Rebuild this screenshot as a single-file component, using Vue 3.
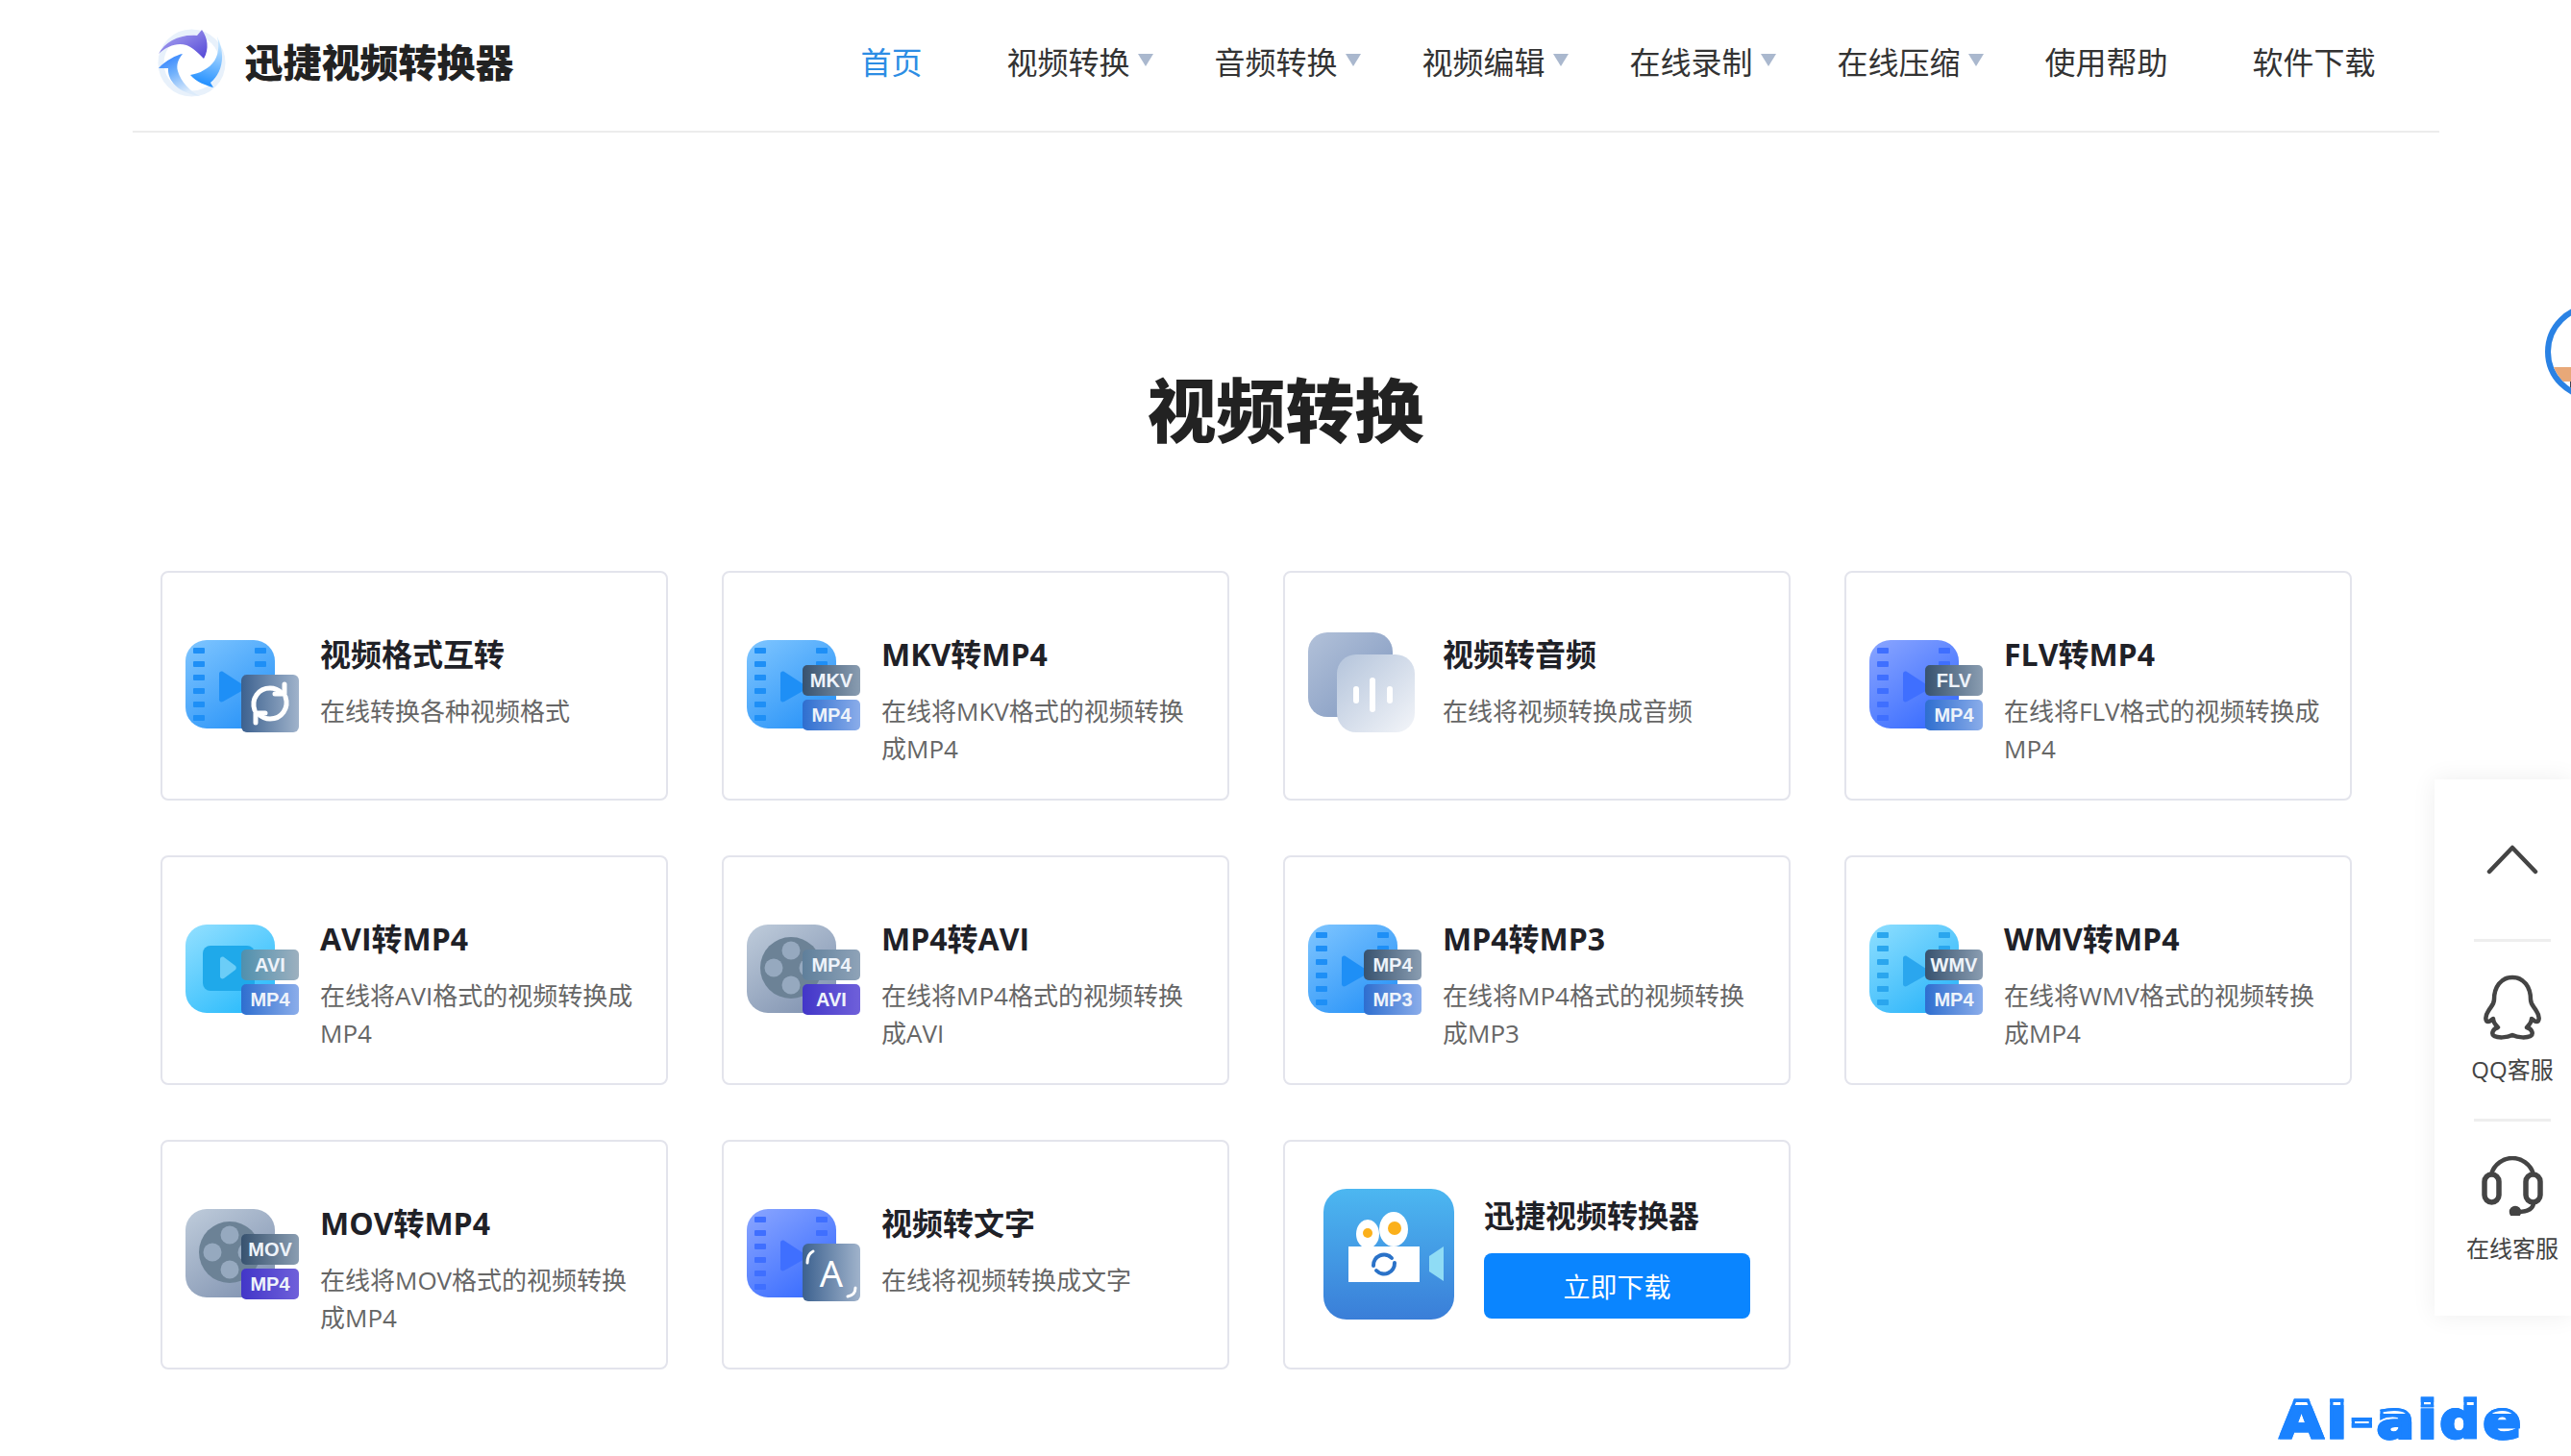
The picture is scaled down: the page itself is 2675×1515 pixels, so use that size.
<script setup>
const navItems = [
  { label: '首页', active: true },
  { label: '视频转换', arrow: true },
  { label: '音频转换', arrow: true },
  { label: '视频编辑', arrow: true },
  { label: '在线录制', arrow: true },
  { label: '在线压缩', arrow: true },
  { label: '使用帮助' },
  { label: '软件下载' }
]

const filmColors = {
  blue: ['#80c6ff', '#2c95f8', '#1e8ff6'],
  indigo: ['#8ba6ff', '#3a6dff', '#3f6fff'],
  cyan: ['#8fdfff', '#2fb6fa', '#2aa6ee']
}

const holeRows = [8, 22, 36, 50, 64, 78]

const tools = [
  { title: '视频格式互转', desc: '在线转换各种视频格式', body: 'film', color: 'blue', over: 'swap' },
  { title: 'MKV转MP4', desc: '在线将MKV格式的视频转换成MP4', body: 'film', color: 'blue', tags: [['MKV', 'dark'], ['MP4', 'blue']] },
  { title: '视频转音频', desc: '在线将视频转换成音频', body: 'audio' },
  { title: 'FLV转MP4', desc: '在线将FLV格式的视频转换成MP4', body: 'film', color: 'indigo', tags: [['FLV', 'dark'], ['MP4', 'blue']] },
  { title: 'AVI转MP4', desc: '在线将AVI格式的视频转换成MP4', body: 'play', tags: [['AVI', 'teal'], ['MP4', 'blue']] },
  { title: 'MP4转AVI', desc: '在线将MP4格式的视频转换成AVI', body: 'reel', tags: [['MP4', 'slate'], ['AVI', 'purple']] },
  { title: 'MP4转MP3', desc: '在线将MP4格式的视频转换成MP3', body: 'film', color: 'blue', tags: [['MP4', 'dark'], ['MP3', 'blue']] },
  { title: 'WMV转MP4', desc: '在线将WMV格式的视频转换成MP4', body: 'film', color: 'cyan', tags: [['WMV', 'dark'], ['MP4', 'blue']] },
  { title: 'MOV转MP4', desc: '在线将MOV格式的视频转换成MP4', body: 'reel', tags: [['MOV', 'dark'], ['MP4', 'purple']] },
  { title: '视频转文字', desc: '在线将视频转换成文字', body: 'film', color: 'indigo', over: 'text' }
]
</script>

<template>
  <div class="page">
    <header class="topbar">
      <div class="brand">
        <svg class="brand-mark" viewBox="0 0 71 73" width="71" height="73">
          <defs>
            <linearGradient id="swirlA" x1="0" y1="0" x2="1" y2="1">
              <stop offset="0" stop-color="#b3adf3" />
              <stop offset="1" stop-color="#5246d6" />
            </linearGradient>
            <linearGradient id="swirlB" x1="0" y1="0" x2="0.5" y2="1">
              <stop offset="0" stop-color="#2477ff" />
              <stop offset="0.5" stop-color="#6fb0fb" />
              <stop offset="1" stop-color="#dcebfb" />
            </linearGradient>
            <linearGradient id="swirlC" x1="0.6" y1="0" x2="0.4" y2="1">
              <stop offset="0" stop-color="#d2ecff" />
              <stop offset="1" stop-color="#188aff" />
            </linearGradient>
          </defs>
          <circle cx="35.5" cy="36.5" r="32" fill="none" stroke="#e8f1fb" stroke-width="6" />
          <path d="M1 27C8 14 24 6 41 8L46 2C52 10 54 22 48 32C42 26 36 20 30 18C20 15 10 19 1 27Z" fill="url(#swirlA)" />
          <path d="M26 27C20 28 8 34 1 42L11 42C10 55 22 68 44 71C34 66 24 56 21 45C19 38 22 32 26 27Z" fill="url(#swirlB)" />
          <path d="M34 49C40 56 50 60 58 62L55 57C66 48 72 30 62 9C66 26 60 38 48 44C44 47 38 48 34 49Z" fill="url(#swirlC)" />
        </svg>
        <span class="brand-name">迅捷视频转换器</span>
      </div>
      <nav class="nav">
        <a v-for="item in navItems" :key="item.label" class="nav-link" :class="{ active: item.active, 'has-arrow': item.arrow }">{{ item.label }}</a>
      </nav>
    </header>

    <main class="content">
      <h1 class="heading">视频转换</h1>
      <div class="tool-grid">
        <div v-for="(tool, i) in tools" :key="tool.title" class="tool-card">
          <div class="tool-icon">
            <svg v-if="tool.body === 'film'" class="tool-body" viewBox="0 0 93 92" width="93" height="92">
              <defs>
                <linearGradient :id="'film' + i" x1="0" y1="0" x2="0.7" y2="1">
                  <stop offset="0" :stop-color="filmColors[tool.color][0]" />
                  <stop offset="1" :stop-color="filmColors[tool.color][1]" />
                </linearGradient>
              </defs>
              <rect width="93" height="92" rx="22" :fill="'url(#film' + i + ')'" />
              <g :fill="filmColors[tool.color][2]">
                <template v-for="y in holeRows" :key="y">
                  <rect x="8" :y="y" width="12" height="6" rx="1" />
                  <rect x="72" :y="y" width="12" height="6" rx="1" />
                </template>
                <path d="M35 35C35 33 37 32 39 33L62 48C63 49 63 50 62 51L39 64C37 65 35 64 35 62Z" />
              </g>
            </svg>

            <svg v-else-if="tool.body === 'play'" class="tool-body" viewBox="0 0 93 92" width="93" height="92">
              <defs>
                <linearGradient :id="'play' + i" x1="0" y1="0" x2="0.7" y2="1">
                  <stop offset="0" stop-color="#94e0ff" />
                  <stop offset="1" stop-color="#2dbcfc" />
                </linearGradient>
              </defs>
              <rect width="93" height="92" rx="22" :fill="'url(#play' + i + ')'" />
              <rect x="18" y="22" width="54" height="47" rx="8" fill="#1fa9ea" />
              <path d="M36 36C36 34 38 33 40 34L52 43C53 44 53 46 52 47L40 56C38 57 36 56 36 54Z" fill="#6bcdf7" />
            </svg>

            <svg v-else-if="tool.body === 'reel'" class="tool-body" viewBox="0 0 93 92" width="93" height="92">
              <defs>
                <linearGradient :id="'reel' + i" x1="0" y1="0" x2="0.7" y2="1">
                  <stop offset="0" stop-color="#bfccdb" />
                  <stop offset="1" stop-color="#8496b3" />
                </linearGradient>
              </defs>
              <rect width="93" height="92" rx="22" :fill="'url(#reel' + i + ')'" />
              <circle cx="46" cy="45" r="32" fill="#6c8296" />
              <g fill="#96a9bf">
                <circle cx="46" cy="27" r="9.5" />
                <circle cx="46" cy="63" r="9.5" />
                <circle cx="28" cy="45" r="9.5" />
                <circle cx="64" cy="45" r="9.5" />
              </g>
            </svg>

            <svg v-else class="tool-body audio" viewBox="0 0 112 104" width="112" height="104">
              <defs>
                <linearGradient :id="'back' + i" x1="0" y1="0" x2="1" y2="1">
                  <stop offset="0" stop-color="#b2c1d9" />
                  <stop offset="1" stop-color="#7f97bf" />
                </linearGradient>
                <linearGradient :id="'front' + i" x1="0" y1="0" x2="1" y2="1">
                  <stop offset="0" stop-color="#b4c4db" />
                  <stop offset="1" stop-color="#f3f5f9" />
                </linearGradient>
              </defs>
              <rect width="88" height="88" rx="20" :fill="'url(#back' + i + ')'" />
              <rect x="30" y="23" width="81" height="81" rx="20" :fill="'url(#front' + i + ')'" />
              <g fill="#fff">
                <rect x="47" y="56" width="6" height="18" rx="3" />
                <rect x="64" y="47" width="6" height="36" rx="3" />
                <rect x="82" y="56" width="6" height="18" rx="3" />
              </g>
            </svg>

            <template v-if="tool.tags">
              <span v-for="tag in tool.tags" :key="tag[0]" class="tag" :class="'tag-' + tag[1]">{{ tag[0] }}</span>
            </template>

            <div v-if="tool.over" class="over-tile">
              <svg v-if="tool.over === 'swap'" viewBox="0 0 60 60" width="60" height="60" fill="none" stroke="#fff" stroke-width="5" stroke-linecap="round" stroke-linejoin="round">
                <path d="M14 37C10 25 18 14 30 14C35 14 39 16 42 19" />
                <path d="M45 10V20H35" />
                <path d="M46 23C50 35 42 46 30 46C25 46 21 44 18 41" />
                <path d="M15 50V40H25" />
              </svg>
              <template v-else>
                <span class="over-letter">A</span>
                <svg class="over-corners" viewBox="0 0 60 60" width="60" height="60" fill="none" stroke="#fff" stroke-width="3" stroke-linecap="round">
                  <path d="M5 20C5 13 7 10 11 8" />
                  <path d="M55 46C55 52 52 54 47 55" />
                </svg>
              </template>
            </div>
          </div>
          <div class="tool-text">
            <h3 class="tool-title">{{ tool.title }}</h3>
            <p class="tool-desc">{{ tool.desc }}</p>
          </div>
        </div>

        <div class="tool-card download-card">
          <svg class="app-icon" viewBox="0 0 136 136" width="136" height="136">
            <defs>
              <linearGradient id="appBg" x1="0" y1="0" x2="0" y2="1">
                <stop offset="0" stop-color="#4cb7f1" />
                <stop offset="1" stop-color="#3a7ed8" />
              </linearGradient>
            </defs>
            <rect width="136" height="136" rx="24" fill="url(#appBg)" />
            <rect x="26" y="60" width="74" height="37" fill="#fff" />
            <path d="M110 70L125 60V96L110 86Z" fill="#8fdcf5" />
            <ellipse cx="46" cy="47" rx="12" ry="15" fill="#fff" />
            <ellipse cx="73" cy="42" rx="15" ry="18" fill="#fff" />
            <circle cx="46" cy="46" r="5" fill="#fbb01b" />
            <circle cx="74" cy="41" r="7" fill="#fbb01b" />
            <g fill="none" stroke="#2a72c8" stroke-width="4" stroke-linecap="round">
              <path d="M52 80A11 11 0 0 1 71 72" />
              <path d="M74 77A11 11 0 0 1 55 85" />
            </g>
          </svg>
          <div class="download-side">
            <h3 class="tool-title download-title">迅捷视频转换器</h3>
            <button class="download-btn">立即下载</button>
          </div>
        </div>
      </div>
    </main>

    <!-- avatar peeking in from the right edge -->
    <div class="peek">
      <div class="peek-skin"></div>
      <div class="peek-dark"></div>
    </div>

    <aside class="side-panel">
      <div class="side-cell side-top">
        <svg viewBox="0 0 54 32" width="54" height="32" fill="none" stroke="#444" stroke-width="4.5" stroke-linecap="round" stroke-linejoin="round">
          <path d="M3 29L27 4L51 29" />
        </svg>
      </div>
      <div class="side-line"></div>
      <div class="side-cell side-qq">
        <svg viewBox="0 0 62 69" width="62" height="69" fill="none" stroke="#444" stroke-width="4.5" stroke-linejoin="round">
          <path d="M31 3C19 3 12 13 12 26C12 31 9 33 6 38C2 44 3 49 6 49C8 49 9 47 11 46C11 50 14 53 16 55C10 57 9 62 12 64C16 66 25 66 31 63C37 66 46 66 50 64C53 62 52 57 46 55C48 53 51 50 51 46C53 47 54 49 56 49C59 49 60 44 56 38C53 33 50 31 50 26C50 13 43 3 31 3Z" />
        </svg>
        <span>QQ客服</span>
      </div>
      <div class="side-line"></div>
      <div class="side-cell side-chat">
        <svg viewBox="0 0 64 62" width="64" height="62" fill="none" stroke="#444" stroke-width="4.5" stroke-linecap="round">
          <path d="M10 19C13 8 23 2 32 2C41 2 51 8 54 19" />
          <rect x="3" y="19" width="15" height="29" rx="7.5" stroke-width="5.5" />
          <rect x="46" y="19" width="15" height="29" rx="7.5" stroke-width="5.5" />
          <path d="M54 48C54 55 47 58 37 58" />
          <circle cx="35" cy="58" r="4" fill="#444" />
        </svg>
        <span>在线客服</span>
      </div>
    </aside>

    <div class="watermark">
      <span class="snow-cap">A</span><span class="snow-cap">I</span><span class="snow-dash">-</span><span class="snow-x">a</span><span class="snow-cap">i</span><span class="snow-cap">d</span><span class="snow-x">e</span>
    </div>
  </div>
</template>

<style>
html,
body {
  background: #fff;
}
</style>

<style scoped>
.page {
  position: relative;
  width: 2675px;
  height: 1515px;
  overflow: hidden;
  background: #fff;
  font-family: "Open Sans", "Noto Sans CJK SC", sans-serif;
  color: #333;
}

.topbar {
  display: flex;
  align-items: center;
  justify-content: space-between;
  box-sizing: border-box;
  width: 2400px;
  height: 138px;
  margin: 0 auto;
  padding: 0 66px 6px 26px;
  border-bottom: 2px solid #ececec;
}

.brand {
  display: flex;
  align-items: center;
  gap: 20px;
}

.brand-name {
  font-size: 40px;
  font-weight: 900;
  color: #222;
  line-height: 1;
}

.nav {
  display: flex;
  gap: 88px;
}

.nav-link {
  position: relative;
  font-size: 32px;
  line-height: 44px;
  color: #333;
}

.nav-link.active {
  color: #2c8de4;
}

.nav-link.has-arrow::after {
  content: "";
  position: absolute;
  left: 137px;
  top: 13px;
  border-top: 13px solid #aab8ce;
  border-left: 8px solid transparent;
  border-right: 8px solid transparent;
}

.content {
  width: 2341px;
  margin: 0 auto;
}

.heading {
  margin: 238px 0 118px;
  font-size: 72px;
  line-height: 100px;
  font-weight: 900;
  text-align: center;
  color: #222;
}

.tool-grid {
  display: grid;
  grid-template-columns: repeat(4, 528px);
  grid-auto-rows: 239px;
  column-gap: 56px;
  row-gap: 57px;
}

.tool-card {
  display: flex;
  align-items: flex-start;
  box-sizing: border-box;
  padding: 70px 0 0 24px;
  border: 2px solid #e3e4ec;
  border-radius: 8px;
  background: #fff;
}

.tool-icon {
  position: relative;
  flex: none;
  width: 118px;
  height: 96px;
  margin-right: 22px;
}

.tool-body {
  display: block;
}

.tool-body.audio {
  margin: -8px 0 0 0;
}

.tag {
  position: absolute;
  left: 58px;
  width: 60px;
  height: 32px;
  border-radius: 5px;
  font-family: "Liberation Sans", sans-serif;
  font-size: 20px;
  font-weight: 700;
  line-height: 32px;
  text-align: center;
  color: #eef3fa;
}

.tag:first-of-type {
  top: 26px;
}

.tag:last-of-type {
  top: 62px;
}

.tag-dark {
  background: linear-gradient(90deg, #37526f, #8a9db1);
}

.tag-slate {
  background: linear-gradient(90deg, #5f7f9b, #8fa3b8);
}

.tag-teal {
  background: linear-gradient(90deg, #4f90ae, #9db0bf);
}

.tag-blue {
  background: linear-gradient(90deg, #2e6ecf, #8badea);
}

.tag-purple {
  background: linear-gradient(90deg, #4236c8, #6f60da);
}

.over-tile {
  position: absolute;
  left: 58px;
  top: 36px;
  width: 60px;
  height: 60px;
  border-radius: 6px;
  background: linear-gradient(90deg, #3c618f, #a0b3cb);
}

.over-tile svg {
  display: block;
}

.over-letter {
  position: absolute;
  left: 0;
  right: 0;
  top: 2px;
  font-family: "Noto Sans", sans-serif;
  font-size: 38px;
  font-weight: 400;
  line-height: 56px;
  text-align: center;
  color: #fff;
}

.over-corners {
  position: absolute;
  left: 0;
  top: 0;
}

.tool-text {
  flex: 1;
  min-width: 0;
  margin-top: -9px;
}

.tool-title {
  margin: 0;
  font-size: 32px;
  font-weight: 700;
  line-height: 48px;
  color: #1f2127;
}

.tool-desc {
  width: 335px;
  margin: 16px 0 0;
  font-size: 26px;
  line-height: 39px;
  color: #666;
}

.download-card {
  gap: 31px;
  padding: 49px 0 0 40px;
}

.app-icon {
  flex: none;
}

.download-side {
  display: flex;
  flex-direction: column;
}

.download-title {
  margin-top: 6px;
  line-height: 44px;
}

.download-btn {
  width: 277px;
  height: 68px;
  margin-top: 17px;
  padding: 0;
  border: none;
  border-radius: 8px;
  background: #0a85ff;
  color: #fff;
  font-family: inherit;
  font-size: 28px;
}

.peek {
  position: absolute;
  left: 2648px;
  top: 316px;
  width: 100px;
  height: 100px;
  box-sizing: border-box;
  border: 6px solid #2a82e4;
  border-radius: 50%;
  overflow: hidden;
  background: #fff;
}

.peek-skin {
  margin-top: 60px;
  height: 15px;
  background: #e8a878;
}

.peek-dark {
  margin: 0 0 0 20px;
  height: 15px;
  background: #3a4250;
}

.side-panel {
  position: absolute;
  left: 2533px;
  top: 811px;
  width: 142px;
  height: 558px;
  box-sizing: border-box;
  padding: 0 21px 0 41px;
  background: #fff;
  box-shadow: 0 0 24px rgba(0, 0, 0, 0.07);
  display: flex;
  flex-direction: column;
  align-items: center;
}

.side-line {
  flex: none;
  width: 80px;
  height: 3px;
  background: #eee;
}

.side-cell {
  display: flex;
  flex-direction: column;
  align-items: center;
  width: 100px;
  color: #444;
  font-size: 24px;
  line-height: 34px;
  white-space: nowrap;
}

.side-top {
  height: 167px;
  justify-content: center;
}

.side-qq {
  height: 184px;
  padding-top: 34px;
  box-sizing: border-box;
  gap: 13px;
}

.side-chat {
  height: 203px;
  padding-top: 36px;
  box-sizing: border-box;
  gap: 17px;
}

.watermark {
  position: absolute;
  left: 2372px;
  top: 1446px;
  display: flex;
  font-family: "DejaVu Sans", sans-serif;
  font-weight: 700;
  font-size: 54px;
  line-height: 64px;
  letter-spacing: 3px;
  transform: scaleX(1.08);
  transform-origin: left top;
  -webkit-text-stroke: 3px #1a82ff;
}

.watermark span {
  color: transparent;
  -webkit-background-clip: text;
  background-clip: text;
}

.snow-cap {
  background-image: linear-gradient(#1a82ff 0 13px, #fff 13px 16px, #1a82ff 16px);
}

.snow-x {
  background-image: linear-gradient(#1a82ff 0 22px, #fff 22px 25px, #1a82ff 25px);
}

.snow-dash {
  background-image: linear-gradient(#1a82ff 0 33px, #fff 33px 35px, #1a82ff 35px);
}
</style>
